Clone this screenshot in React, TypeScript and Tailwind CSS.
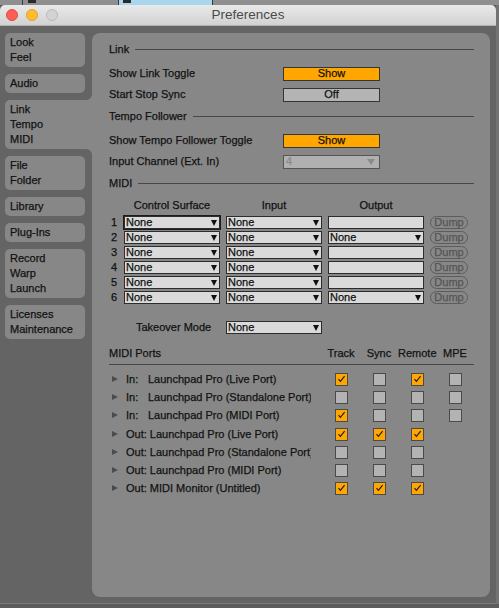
import React from "react";

const SIDEBAR = [
  { lines: ["Look", "Feel"] },
  { lines: ["Audio"] },
  { lines: ["Link", "Tempo", "MIDI"], active: true },
  { lines: ["File", "Folder"] },
  { lines: ["Library"] },
  { lines: ["Plug-Ins"] },
  { lines: ["Record", "Warp", "Launch"] },
  { lines: ["Licenses", "Maintenance"] },
];

const SURFACES = [
  { output: "" },
  { output: "None" },
  { output: "" },
  { output: "" },
  { output: "" },
  { output: "None" },
];

const PORTS = [
  { dir: "In", name: "Launchpad Pro (Live Port)", track: true, sync: false, remote: true, mpe: false },
  { dir: "In", name: "Launchpad Pro (Standalone Port)", track: false, sync: false, remote: false, mpe: false },
  { dir: "In", name: "Launchpad Pro (MIDI Port)", track: true, sync: false, remote: false, mpe: false },
  { dir: "Out", name: "Launchpad Pro (Live Port)", track: true, sync: true, remote: true },
  { dir: "Out", name: "Launchpad Pro (Standalone Port)", track: false, sync: false, remote: false },
  { dir: "Out", name: "Launchpad Pro (MIDI Port)", track: false, sync: false, remote: false },
  { dir: "Out", name: "MIDI Monitor (Untitled)", track: true, sync: true, remote: true },
];

function Section({ title }: { title: string }) {
  return (
    <div className="flex items-center h-[16px] gap-[6px] mt-[3px] mb-[6px]">
      <span>{title}</span>
      <div className="flex-1 h-px bg-[#474747]" />
    </div>
  );
}

function Toggle({ label, on }: { label: string; on?: boolean }) {
  return (
    <div
      className={`w-[97px] h-[14px] border border-[#353535] flex items-center justify-center leading-none ${
        on ? "bg-[#ffa600]" : "bg-[#b4b4b4]"
      }`}
    >
      {label}
    </div>
  );
}

function Select({ value, focused, arrow = true }: { value?: string; focused?: boolean; arrow?: boolean }) {
  return (
    <div
      className={`w-[96px] h-[13px] border border-[#2c2c2c] bg-[#dadada] text-[#111111] flex items-center justify-between pl-[1px] pr-[2px] leading-none ${
        focused ? "outline outline-1 outline-[#1c1c1c]" : ""
      }`}
    >
      <span>{value}</span>
      {arrow && <span className="border-x-[3.5px] border-x-transparent border-t-[6px] border-t-[#111111]" />}
    </div>
  );
}

function Check({ on }: { on: boolean }) {
  return (
    <div
      className={`w-[13px] h-[13px] border border-[#4a4a4a] flex items-center justify-center ${
        on ? "bg-[#ffa600]" : "bg-[#b3b3b3]"
      }`}
    >
      {on && (
        <svg width="9" height="8" viewBox="0 0 9 8">
          <path d="M1.5 4.2 L3.4 6.4 L7.6 1.2" stroke="#1a1a1a" strokeWidth="1.1" fill="none" />
        </svg>
      )}
    </div>
  );
}

export default function App() {
  return (
    <div className="w-[499px] h-[608px] bg-[#5c5c5c] overflow-hidden font-['Liberation_Sans',Arial,sans-serif] text-[11px] text-[#121212] [-webkit-text-stroke:0.25px_currentColor]">
      {/* window behind, peeking above */}
      <div className="flex h-[5px] bg-[#8f8f8f]">
        <div className="w-[22px]" />
        <div className="w-px bg-[#3c3c3c]" />
        <div className="w-[5px]" />
        <div className="w-[8px] h-[3px] bg-[#2a2a2a]" />
        <div className="w-[82px]" />
        <div className="w-px bg-[#3c3c3c]" />
        <div className="w-[93px] bg-[#a9d6ee] flex">
          <div className="ml-[4px] w-[8px] h-[3px] bg-[#2a2a2a]" />
        </div>
        <div className="w-px bg-[#3c3c3c]" />
      </div>

      <div className="flex">
        <div className="w-[496px] rounded-t-[5px] overflow-hidden">
          {/* title bar */}
          <div className="relative h-[21px] bg-gradient-to-b from-[#e9e9e9] to-[#d2d2d2] border-b border-[#b0b0b0] flex items-center justify-center">
            <div className="absolute left-[6px] top-[4px] flex gap-[8px]">
              <div className="w-[12px] h-[12px] rounded-full bg-[#fd5f57] border border-[#df4842]" />
              <div className="w-[12px] h-[12px] rounded-full bg-[#febc2e] border border-[#dfa025]" />
              <div className="w-[12px] h-[12px] rounded-full bg-[#d3d3d3] border border-[#bababa]" />
            </div>
            <span className="text-[13.5px] text-[#4a4a4a] [-webkit-text-stroke:0px]">Preferences</span>
          </div>

          {/* body */}
          <div className="bg-[#646464] flex gap-[7px] pl-[5px] pr-[6px] pt-[7px] pb-[6px]">
            <div className="w-[80px] flex flex-col gap-[7px]">
              {SIDEBAR.map((item) => (
                <div
                  key={item.lines[0]}
                  className={`relative bg-[#878787] py-[2px] pl-[5px] leading-[15px] ${
                    item.active ? "w-[87px] rounded-l-[5px]" : "w-[80px] rounded-[5px]"
                  }`}
                >
                  {item.lines.map((l) => (
                    <div key={l}>{l}</div>
                  ))}
                  {item.active && (
                    <>
                      <div className="absolute right-0 -top-[7px] w-[7px] h-[7px] bg-[#878787]">
                        <div className="w-full h-full bg-[#646464] rounded-br-[6px]" />
                      </div>
                      <div className="absolute right-0 -bottom-[7px] w-[7px] h-[7px] bg-[#878787]">
                        <div className="w-full h-full bg-[#646464] rounded-tr-[6px]" />
                      </div>
                    </>
                  )}
                </div>
              ))}
            </div>

            {/* main panel */}
            <div className="w-[398px] h-[564px] bg-[#878787] rounded-[8px] pl-[17px] pr-[16px] pt-[5px]">
              <Section title="Link" />
              <div className="flex items-center h-[21px]">
                <span className="w-[174px]">Show Link Toggle</span>
                <Toggle label="Show" on />
              </div>
              <div className="flex items-center h-[21px]">
                <span className="w-[174px]">Start Stop Sync</span>
                <Toggle label="Off" />
              </div>

              <Section title="Tempo Follower" />
              <div className="flex items-center h-[21px]">
                <span className="w-[174px]">Show Tempo Follower Toggle</span>
                <Toggle label="Show" on />
              </div>
              <div className="flex items-center h-[21px]">
                <span className="w-[174px]">Input Channel (Ext. In)</span>
                <div className="w-[97px] h-[14px] border border-[#555555] bg-[#b0b0b0] text-[#8a8a8a] flex items-center justify-between pl-[2px] pr-[4px] leading-none">
                  <span>4</span>
                  <span className="border-x-[4px] border-x-transparent border-t-[6px] border-t-[#8a8a8a]" />
                </div>
              </div>

              <Section title="MIDI" />
              <div className="flex h-[16px] items-center pl-[15px] gap-[6px]">
                <span className="w-[96px] text-center">Control Surface</span>
                <span className="w-[96px] text-center">Input</span>
                <span className="w-[96px] text-center">Output</span>
              </div>
              <div className="mt-[2px] flex flex-col">
                {SURFACES.map((row, i) => (
                  <div key={i} className="flex items-center h-[15px]">
                    <span className="w-[15px] pl-[2px]">{i + 1}</span>
                    <div className="flex gap-[6px] items-center">
                      <Select value="None" focused={i === 0} />
                      <Select value="None" />
                      <Select value={row.output} arrow={row.output !== ""} />
                      <div className="w-[38px] h-[13px] rounded-full border border-[#5c5c5c] text-[#555555] flex items-center justify-center leading-none">
                        Dump
                      </div>
                    </div>
                  </div>
                ))}
              </div>

              <div className="mt-[15px] flex items-center h-[15px]">
                <span className="w-[117px] pl-[27px]">Takeover Mode</span>
                <Select value="None" />
              </div>

              {/* MIDI ports */}
              <div className="mt-[10px] h-[20px] flex items-start border-b border-[#474747] leading-[16px]">
                <span className="w-[213px]">MIDI Ports</span>
                <span className="w-[38px] text-center">Track</span>
                <span className="w-[38px] text-center">Sync</span>
                <span className="w-[38px] text-center">Remote</span>
                <span className="w-[38px] text-center">MPE</span>
              </div>
              <div className="mt-[5px] flex flex-col">
                {PORTS.map((p, i) => (
                  <div key={i} className={`flex items-center h-[18px] ${i === 3 ? "mt-[1px]" : ""}`}>
                    <div className="w-[213px] flex items-center">
                      <span className="ml-[3px] w-[14px] h-0 border-y-[3.5px] border-y-transparent">
                        <span className="block w-0 h-0 -mt-[3.5px] border-y-[3.5px] border-y-transparent border-l-[6px] border-l-[#4b4b4b]" />
                      </span>
                      <div className="w-[185px] overflow-hidden whitespace-nowrap flex">
                        {p.dir === "In" ? (
                          <>
                            <span className="w-[22px] shrink-0">In:</span>
                            <span>{p.name}</span>
                          </>
                        ) : (
                          <span>Out: {p.name}</span>
                        )}
                      </div>
                    </div>
                    <div className="w-[38px] flex justify-center"><Check on={p.track} /></div>
                    <div className="w-[38px] flex justify-center"><Check on={p.sync} /></div>
                    <div className="w-[38px] flex justify-center"><Check on={p.remote} /></div>
                    {p.mpe !== undefined && (
                      <div className="w-[38px] flex justify-center"><Check on={p.mpe} /></div>
                    )}
                  </div>
                ))}
              </div>
            </div>
          </div>
          <div className="h-px bg-[#7a7a7a]" />
        </div>
        <div className="flex-1 bg-[#737373]" />
      </div>
    </div>
  );
}
